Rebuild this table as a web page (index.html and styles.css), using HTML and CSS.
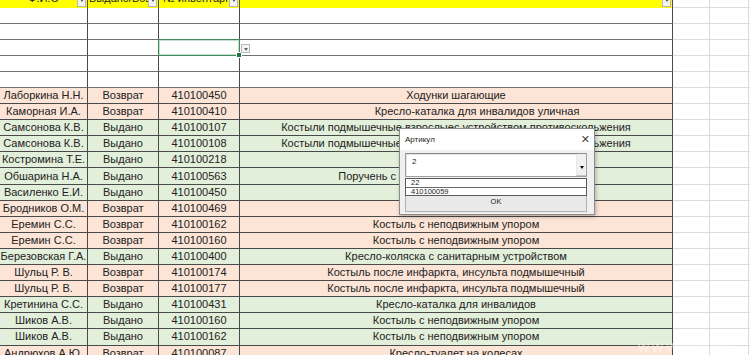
FILE: index.html
```html
<!DOCTYPE html>
<html lang="ru">
<head>
<meta charset="utf-8">
<link rel="stylesheet" href="styles.css">
</head>
<body>
<div class="sheet">
  <div class="row head">
    <div class="c c1 yel"><span class="ht">Ф.И.О</span><i class="fb"></i></div>
    <div class="c c2 yel"><span class="ht l">Выдано/Возврат</span><i class="fb"></i></div>
    <div class="c c3 yel"><span class="ht l">№ инвентарный</span><i class="fb"></i></div>
    <div class="c c4 yel"><span></span><i class="fb"></i></div>
    <div class="c g"></div><div class="c g"></div><div class="c g last"></div>
  </div>
  <div class="row empty"><div class="c c1"></div><div class="c c2"></div><div class="c c3"></div><div class="c c4"></div><div class="c g"></div><div class="c g"></div><div class="c g last"></div></div>
  <div class="row empty"><div class="c c1"></div><div class="c c2"></div><div class="c c3"></div><div class="c c4"></div><div class="c g"></div><div class="c g"></div><div class="c g last"></div></div>
  <div class="row empty selrow"><div class="c c1"></div><div class="c c2"></div><div class="c c3 sel"><b class="frame"></b><b class="handle"></b><i class="dd"></i></div><div class="c c4"></div><div class="c g"></div><div class="c g"></div><div class="c g last"></div></div>
  <div class="row empty"><div class="c c1"></div><div class="c c2"></div><div class="c c3"></div><div class="c c4"></div><div class="c g"></div><div class="c g"></div><div class="c g last"></div></div>
  <div class="row empty"><div class="c c1"></div><div class="c c2"></div><div class="c c3"></div><div class="c c4"></div><div class="c g"></div><div class="c g"></div><div class="c g last"></div></div>

  <div class="row pe"><div class="c c1"><span>Лаборкина Н.Н.</span></div><div class="c c2"><span>Возврат</span></div><div class="c c3"><span>410100450</span></div><div class="c c4"><span>Ходунки шагающие</span></div><div class="c g"></div><div class="c g"></div><div class="c g last"></div></div>
  <div class="row pe"><div class="c c1"><span>Каморная И.А.</span></div><div class="c c2"><span>Возврат</span></div><div class="c c3"><span>410100410</span></div><div class="c c4"><span class="shift">Кресло-каталка для инвалидов уличная</span></div><div class="c g"></div><div class="c g"></div><div class="c g last"></div></div>
  <div class="row gr"><div class="c c1"><span>Самсонова К.В.</span></div><div class="c c2"><span>Выдано</span></div><div class="c c3"><span>410100107</span></div><div class="c c4"><span>Костыли подмышечные взрослыес устройством противоскольжения</span></div><div class="c g"></div><div class="c g"></div><div class="c g last"></div></div>
  <div class="row gr"><div class="c c1"><span>Самсонова К.В.</span></div><div class="c c2"><span>Выдано</span></div><div class="c c3"><span>410100108</span></div><div class="c c4"><span>Костыли подмышечные взрослыес устройством противоскольжения</span></div><div class="c g"></div><div class="c g"></div><div class="c g last"></div></div>
  <div class="row gr"><div class="c c1"><span>Костромина Т.Е.</span></div><div class="c c2"><span>Выдано</span></div><div class="c c3"><span>410100218</span></div><div class="c c4"><span>Трость опорная</span></div><div class="c g"></div><div class="c g"></div><div class="c g last"></div></div>
  <div class="row gr"><div class="c c1"><span>Обшарина Н.А.</span></div><div class="c c2"><span>Выдано</span></div><div class="c c3"><span>410100563</span></div><div class="c c4"><span>Поручень с 2-мя точками опоры для санузлов</span></div><div class="c g"></div><div class="c g"></div><div class="c g last"></div></div>
  <div class="row gr"><div class="c c1"><span>Василенко Е.И.</span></div><div class="c c2"><span>Выдано</span></div><div class="c c3"><span>410100450</span></div><div class="c c4"><span>Ходунки шагающие</span></div><div class="c g"></div><div class="c g"></div><div class="c g last"></div></div>
  <div class="row pe"><div class="c c1"><span>Бродников О.М.</span></div><div class="c c2"><span>Возврат</span></div><div class="c c3"><span>410100469</span></div><div class="c c4"><span>Трость опорная</span></div><div class="c g"></div><div class="c g"></div><div class="c g last"></div></div>
  <div class="row pe"><div class="c c1"><span>Еремин С.С.</span></div><div class="c c2"><span>Возврат</span></div><div class="c c3"><span>410100162</span></div><div class="c c4"><span>Костыль с неподвижным упором</span></div><div class="c g"></div><div class="c g"></div><div class="c g last"></div></div>
  <div class="row pe"><div class="c c1"><span>Еремин С.С.</span></div><div class="c c2"><span>Возврат</span></div><div class="c c3"><span>410100160</span></div><div class="c c4"><span>Костыль с неподвижным упором</span></div><div class="c g"></div><div class="c g"></div><div class="c g last"></div></div>
  <div class="row gr"><div class="c c1"><span>Березовская Г.А.</span></div><div class="c c2"><span>Выдано</span></div><div class="c c3"><span>410100400</span></div><div class="c c4"><span>Кресло-коляска с санитарным устройством</span></div><div class="c g"></div><div class="c g"></div><div class="c g last"></div></div>
  <div class="row pe"><div class="c c1"><span>Шульц Р. В.</span></div><div class="c c2"><span>Возврат</span></div><div class="c c3"><span>410100174</span></div><div class="c c4"><span>Костыль после инфаркта, инсульта подмышечный</span></div><div class="c g"></div><div class="c g"></div><div class="c g last"></div></div>
  <div class="row pe"><div class="c c1"><span>Шульц Р. В.</span></div><div class="c c2"><span>Возврат</span></div><div class="c c3"><span>410100177</span></div><div class="c c4"><span>Костыль после инфаркта, инсульта подмышечный</span></div><div class="c g"></div><div class="c g"></div><div class="c g last"></div></div>
  <div class="row gr"><div class="c c1"><span>Кретинина С.С.</span></div><div class="c c2"><span>Выдано</span></div><div class="c c3"><span>410100431</span></div><div class="c c4"><span>Кресло-каталка для инвалидов</span></div><div class="c g"></div><div class="c g"></div><div class="c g last"></div></div>
  <div class="row gr"><div class="c c1"><span>Шиков А.В.</span></div><div class="c c2"><span>Выдано</span></div><div class="c c3"><span>410100160</span></div><div class="c c4"><span>Костыль с неподвижным упором</span></div><div class="c g"></div><div class="c g"></div><div class="c g last"></div></div>
  <div class="row gr"><div class="c c1"><span>Шиков А.В.</span></div><div class="c c2"><span>Выдано</span></div><div class="c c3"><span>410100162</span></div><div class="c c4"><span>Костыль с неподвижным упором</span></div><div class="c g"></div><div class="c g"></div><div class="c g last"></div></div>
  <div class="row pe"><div class="c c1"><span>Андрюхов А.Ю.</span></div><div class="c c2"><span>Возврат</span></div><div class="c c3"><span>410100087</span></div><div class="c c4"><span>Кресло-туалет на колесах</span></div><div class="c g"></div><div class="c g"></div><div class="c g last"></div></div>
</div>

<div class="watermark">www.excel-office.ru</div>

<div class="dialog">
  <div class="dtitle"><span>Артикул</span><span class="close">✕</span></div>
  <div class="dbody">
    <div class="combo"><span class="val">2</span><span class="arrow"><i></i></span></div>
    <div class="list"><div class="item">22</div><div class="item">410100059</div></div>
    <div class="okbtn">OK</div>
  </div>
</div>
</body>
</html>
```

FILE: styles.css
```css
* { box-sizing: border-box; }
html, body { margin: 0; padding: 0; background: #fff; overflow: hidden; }
body { width: 750px; height: 355px; position: relative; font-family: "Liberation Sans", Arial, sans-serif; font-size: 11px; color: #222; }

.sheet { display: flex; flex-direction: column; margin-top: -9px; }
.row { display: grid; grid-template-columns: 88px 71px 81px 433px 37px 39px 1fr; height: 16px; }
.row.head { height: 17px; }
.row.pe, .row.gr { height: 16.1px; }
.c { border-right: 1px solid #4a4a4a; border-bottom: 1px solid #4a4a4a; display: flex; align-items: center; justify-content: center; overflow: hidden; white-space: nowrap; position: relative; line-height: 15px; }
.c span { flex: none; }
.c span.l { margin-right: auto; margin-left: 1px; }
.c span.shift { padding-left: 42px; }
.row.empty .c.c1, .row.empty .c.c2, .row.empty .c.c3, .row.empty .c.c4 { border-bottom-color: #707070; }
.c.g { border-right: 1px solid #d9d9d9; border-bottom: 1px solid #dcdcdc; background: #fff; }
.c.g.last { border-right: none; }

.yel { background: #ffff00; border-bottom: none !important; border-right-color: #4a4a4a; }
.ht { position: relative; top: -1px; }
.c2 .ht { max-width: 59px; overflow: hidden; }
.c3 .ht { max-width: 69px; overflow: hidden; margin-left: 4px !important; }
.fb { position: absolute; right: 1px; bottom: 1px; width: 9px; height: 13px; background: #f4f4f4; border: 1px solid #b5b5b5; }
.fb::after { content: ""; position: absolute; left: 2px; bottom: 4px; border-left: 2px solid transparent; border-right: 2px solid transparent; border-top: 3px solid #555; }

.pe .c1, .pe .c2, .pe .c3, .pe .c4 { background: #fce4d6; }
.gr .c1, .gr .c2, .gr .c3, .gr .c4 { background: #e2efda; }

.selrow { position: relative; z-index: 3; }
.sel { overflow: visible; z-index: 2; }
.frame { position: absolute; left: -1px; top: -1px; width: 82px; height: 17px; border: 1px solid #3d8a5b; box-shadow: inset 0 0 0 1px rgba(90,160,115,0.35); pointer-events: none; }
.handle { position: absolute; right: -3px; bottom: -3px; width: 4px; height: 4px; background: #217346; border: 1px solid #fff; box-sizing: content-box; }
.dd { position: absolute; left: 82px; top: 4px; width: 9px; height: 9px; background: #f4f4f4; border: 1px solid #b8b8b8; }
.dd::after { content: ""; position: absolute; left: 2px; top: 3px; border-left: 2px solid transparent; border-right: 2px solid transparent; border-top: 3px solid #666; }

.watermark { position: absolute; left: 637px; top: 337px; font-size: 16px; color: rgba(255,255,255,0.45); font-family: "DejaVu Sans", sans-serif; letter-spacing: 1px; }

.dialog { position: absolute; left: 399px; top: 128px; width: 196px; height: 87px; background: #fff; border: 1px solid #8c8c8c; box-shadow: 1px 2px 4px rgba(0,0,0,0.25); font-family: "Liberation Sans", Arial, sans-serif; display: flex; flex-direction: column; }
.dtitle { height: 21px; display: flex; align-items: center; justify-content: space-between; padding: 0 4px 0 5px; font-size: 8px; color: #1a1a1a; background: #fff; }
.close { font-size: 11px; color: #444; font-family: "DejaVu Sans", sans-serif; }
.dbody { flex: 1; background: #f0f0f0; padding: 3px 7px 2px 5px; display: flex; flex-direction: column; }
.combo { height: 24px; background: #fff; border: 1px solid #a0a0a0; border-top-color: #8a8a8a; display: flex; justify-content: space-between; box-shadow: inset 1px 1px 0 #e4e4e4; }
.combo .val { font-size: 8px; padding: 3px 0 0 6px; color: #222; }
.arrow { width: 10px; border-left: 1px solid #e8e8e8; background: #f0f0f0; position: relative; border-bottom: 1px solid #c8c8c8; }
.arrow i { position: absolute; left: 3px; top: 12px; border-left: 2px solid transparent; border-right: 2px solid transparent; border-top: 3px solid #000; }
.list { margin-top: 1px; border: 1px solid #5a5a5a; background: #fff; }
.item { height: 8px; font-size: 7.5px; line-height: 8px; padding-left: 5px; color: #222; }
.item + .item { border-top: 1px solid #6a6a6a; height: 8px; }
.okbtn { height: 16px; background: #e9e9e9; border: 1px solid #b0b0b0; border-top: none; font-size: 7.5px; text-align: center; line-height: 12px; color: #222; }
```
